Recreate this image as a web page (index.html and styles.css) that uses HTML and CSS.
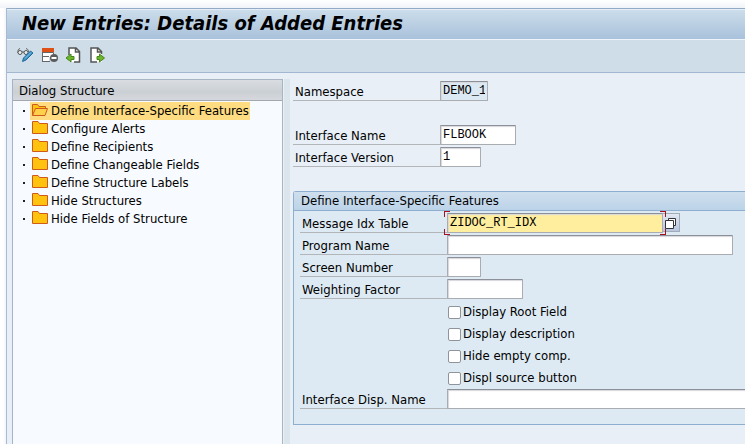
FILE: index.html
```
<!DOCTYPE html>
<html lang="en">
<head>
<meta charset="utf-8">
<title>New Entries: Details of Added Entries</title>
<link rel="stylesheet" href="styles.css">
</head>
<body>
<svg class="defs" aria-hidden="true">
  <symbol id="folder" viewBox="0 0 16 13">
    <path d="M.5 12.5V.5H6L7.500 2.500H15.500V12.500Z" fill="#ffc20e" stroke="#cf5a1c"/>
  </symbol>
  <symbol id="folder-open" viewBox="0 0 16 13">
    <path d="M.5 12.500V1.500H5.500L7 3.500H13.500V5.500" fill="#ffc20e" stroke="#cf5a1c"/>
    <path d="M.5 12.500L3.500 5.500H15.500L13 12.500Z" fill="#ffd04a" stroke="#cf5a1c"/>
  </symbol>
</svg>
<div class="window">
  <header class="titlebar"><h1>New Entries: Details of Added Entries</h1></header>
  <div class="toolbar" role="toolbar">
    <button type="button" aria-label="Display or change">
      <svg width="17" height="16" viewBox="0 0 17 16" fill="none">
        <path d="M3 1.500C1 2 .7 4 1 6M9 1.500C11 2 11.500 3.500 11.500 5" stroke="#666"/>
        <circle cx="3" cy="5.500" r="2" fill="#e8f0f5" stroke="#555"/><circle cx="9" cy="5.500" r="2" fill="#e8f0f5" stroke="#555"/>
        <path d="M5 5H7" stroke="#555"/>
        <path d="M5.500 14.500L6.500 11L13.500 4L16 6L9 13Z" fill="#3c91c6" stroke="#236a98"/>
        <path d="M8 11.500L14 5.500" stroke="#8bc6e8"/>
      </svg>
    </button>
    <button type="button" aria-label="Delete row">
      <svg width="17" height="16" viewBox="0 0 17 16" fill="none">
        <path d="M2 6H12V10H2ZM2 10H8V14H2Z" fill="#fff"/>
        <path d="M1.500 1V15M1 5.500H12.500V7M1 9.500H8M1 14.500H9" stroke="#666"/>
        <path d="M1 1H13V5H1Z" fill="#df5016"/>
        <circle cx="13" cy="11" r="4" fill="#5c5c5c"/><path d="M10.500 11H15.500" stroke="#fff" stroke-width="2"/>
      </svg>
    </button>
    <button type="button" aria-label="Previous entry">
      <svg width="17" height="16" viewBox="0 0 17 16">
        <path d="M4 1H11L15 5V15H4Z" fill="#fff"/>
        <path d="M4 8V1H11L14.500 4.500V15H9M10.500 1V5H14.500" fill="none" stroke="#555" stroke-width="1.500"/>
        <path d="M1 11L6 7V9.500H9V12.500H6V15Z" fill="#6eb52f" stroke="#438718"/>
      </svg>
    </button>
    <button type="button" aria-label="Next entry">
      <svg width="17" height="16" viewBox="0 0 17 16">
        <path d="M2 1H9L13 5V15H2Z" fill="#fff"/>
        <path d="M8 15H2V1H9L12.500 4.500V7M8.500 1V5H12.500" fill="none" stroke="#555" stroke-width="1.500"/>
        <path d="M15.500 11L10.500 7V9.500H8V12.500H10.500V15Z" fill="#6eb52f" stroke="#438718"/>
      </svg>
    </button>
  </div>
  <main class="content">
    <nav class="tree" aria-label="Dialog Structure">
      <h2>Dialog Structure</h2>
      <ul>
        <li><a class="selected" href="#"><svg class="folder"><use href="#folder-open"/></svg>Define Interface-Specific Features</a></li>
        <li><a href="#"><svg class="folder"><use href="#folder"/></svg>Configure Alerts</a></li>
        <li><a href="#"><svg class="folder"><use href="#folder"/></svg>Define Recipients</a></li>
        <li><a href="#"><svg class="folder"><use href="#folder"/></svg>Define Changeable Fields</a></li>
        <li><a href="#"><svg class="folder"><use href="#folder"/></svg>Define Structure Labels</a></li>
        <li><a href="#"><svg class="folder"><use href="#folder"/></svg>Hide Structures</a></li>
        <li><a href="#"><svg class="folder"><use href="#folder"/></svg>Hide Fields of Structure</a></li>
      </ul>
    </nav>
    <div class="splitter"></div>
    <form class="details">
      <div class="keys">
        <div class="row spaced"><label for="ns">Namespace</label><input class="w48" id="ns" value="DEMO_1" readonly></div>
        <div class="row"><label for="name">Interface Name</label><input class="w76" id="name" value="FLBOOK"></div>
        <div class="row"><label for="ver">Interface Version</label><input class="w41" id="ver" value="1"></div>
      </div>
      <section class="group">
        <h2>Define Interface-Specific Features</h2>
        <div class="fields">
          <div class="row"><label for="idx">Message Idx Table</label><span class="focus"><input class="w216" id="idx" value="ZIDOC_RT_IDX"><i class="corner tl"></i><i class="corner bl"></i><i class="corner tr"></i><i class="corner br"></i></span><button class="help" type="button" aria-label="Search help"><svg width="12" height="12" viewBox="0 0 12 12"><path d="M3.500 .5H10.500V7.500H3.500Z" fill="#fff" stroke="#333"/><path d="M.5 2.500H8.500V10.500H.5Z" fill="#fff" stroke="#333"/></svg></button></div>
          <div class="row"><label for="prog">Program Name</label><input class="w286" id="prog"></div>
          <div class="row"><label for="scr">Screen Number</label><input class="w34" id="scr"></div>
          <div class="row"><label for="wt">Weighting Factor</label><input class="w76" id="wt"></div>
          <div class="check"><input type="checkbox" id="c1"><label for="c1">Display Root Field</label></div>
          <div class="check"><input type="checkbox" id="c2"><label for="c2">Display description</label></div>
          <div class="check"><input type="checkbox" id="c3"><label for="c3">Hide empty comp.</label></div>
          <div class="check"><input type="checkbox" id="c4"><label for="c4">Displ source button</label></div>
          <div class="row"><label for="disp">Interface Disp. Name</label><input class="grow" id="disp"></div>
        </div>
      </section>
    </form>
  </main>
</div>
</body>
</html>
```
FILE: styles.css
```
* { box-sizing: border-box; }
body {
  margin: 0;
  min-height: 100vh;
  display: flex;
  padding: 8px 0 0 6px;
  background: linear-gradient(#fff, #f0f3f9 8px, transparent 8px), linear-gradient(90deg, #fff 3px, #f1f4fa 6px);
  font: 13px/18px "DejaVu Sans Condensed", "DejaVu Sans", sans-serif;
  color: #000;
  overflow: hidden;
}
h1, h2, ul { margin: 0; padding: 0; font-weight: normal; }
.defs { position: absolute; width: 0; height: 0; }
.window {
  flex: 1;
  min-width: 0;
  display: flex;
  flex-direction: column;
  border-left: 1px solid #a9bbd0;
  background: #e8eff7;
}
.titlebar {
  height: 32px;
  padding-left: 15px;
  border-top: 1px solid #93aac6;
  border-bottom: 1px solid #edf4fa;
  box-shadow: inset 0 1px #e6eff7;
  background: linear-gradient(#cddeeb, #a9c1db);
}
.titlebar h1 { font-size: 20px; line-height: 29px; font-weight: bold; font-style: italic; white-space: nowrap; }
.toolbar {
  height: 33px;
  display: flex;
  align-items: flex-start;
  gap: 7px;
  padding: 7px 0 0 10px;
  background: #cfdde8;
  border-bottom: 1px solid #a3b8d0;
}
.toolbar button { border: 0; padding: 0; width: 17px; height: 16px; background: none; }
.toolbar svg { display: block; }
.content { flex: 1; display: flex; padding: 6px 0 0 5px; }
.tree { width: 271px; flex: none; border: 1px solid #a9b4c2; border-bottom: 0; background: #f7faff; }
.tree h2 {
  height: 21px;
  padding-left: 6px;
  line-height: 22px;
  font-size: 13px;
  border-bottom: 1px solid #a2a7b0;
  background: linear-gradient(#d9dde2, #cbd0d5 60%, #d5d8dc);
}
.tree ul { list-style: none; padding: 1px 0 0 10px; }
.tree li { height: 18px; display: flex; align-items: center; }
.tree li::before { content: ""; width: 2px; height: 2px; background: #222; margin-right: 5px; }
.tree a { display: flex; gap: 3px; padding: 0 1px 0 2px; color: inherit; text-decoration: none; white-space: nowrap; }
.tree .selected { background: #ffdc82; }
.folder { width: 16px; height: 13px; margin-top: 1px; }
.splitter { width: 6px; margin-left: 1px; flex: none; background: #dbe6ec; }
.details { flex: 1; min-width: 0; padding: 2px 0 0 3px; }
.row { display: flex; height: 20px; margin-bottom: 2px; }
.row.spaced { margin-bottom: 24px; }
.row label { width: 147px; flex: none; padding-left: 2px; line-height: 21px; border-bottom: 1px solid #b3b6b9; white-space: nowrap; }
.row input {
  height: 20px;
  padding: 0 2px;
  border: 1px solid #a9adb2;
  border-top-color: #8c9098;
  border-radius: 1px;
  background: #fff;
  box-shadow: inset 1px 1px 1px #d8d8dc;
  font: 12px "Liberation Mono", monospace;
  color: #000;
  outline: 0;
}
.row input[readonly] { background: #dce9f2; }
.w34 { width: 34px; }
.w41 { width: 41px; }
.w48 { width: 48px; }
.w76 { width: 76px; }
.w216 { width: 216px; }
.w286 { width: 286px; }
.row .grow { flex: 1; min-width: 0; border-right: 0; border-radius: 0; }
.group {
  margin-top: 24px;
  border: 1px solid #8eafd0;
  border-right: 0;
  border-radius: 3px 0 0 0;
  background: #deeaf3;
}
.group h2 {
  height: 19px;
  padding-left: 7px;
  font-size: 13px;
  line-height: 18px;
  border-bottom: 1px solid #8eafd0;
  background: linear-gradient(#cfdfee, #bcd3e8);
}
.fields { padding: 2px 0 13px 6px; }
.focus { position: relative; display: flex; }
.row .focus input { background: #ffee9e; }
.corner { position: absolute; width: 6px; height: 6px; border: 0 solid #a8101c; }
.tl { left: -3px; top: -2px; border-width: 1px 0 0 1px; }
.bl { left: -3px; bottom: -2px; border-width: 0 0 1px 1px; }
.tr { right: -3px; top: -2px; border-width: 1px 1px 0 0; }
.br { right: -3px; bottom: -2px; border-width: 0 1px 1px 0; }
.help { width: 17px; height: 19px; padding: 3px 0 0 2px; border: 1px solid #a3abb9; border-left: 0; background: linear-gradient(#e2e8f3, #b7c5df); }
.help svg { display: block; }
.check { display: flex; align-items: center; height: 22px; padding-left: 148px; gap: 2px; }
.check input { appearance: none; width: 13px; height: 13px; margin: 0; border: 1px solid #8f939a; border-radius: 2px; background: #fff; }
```
